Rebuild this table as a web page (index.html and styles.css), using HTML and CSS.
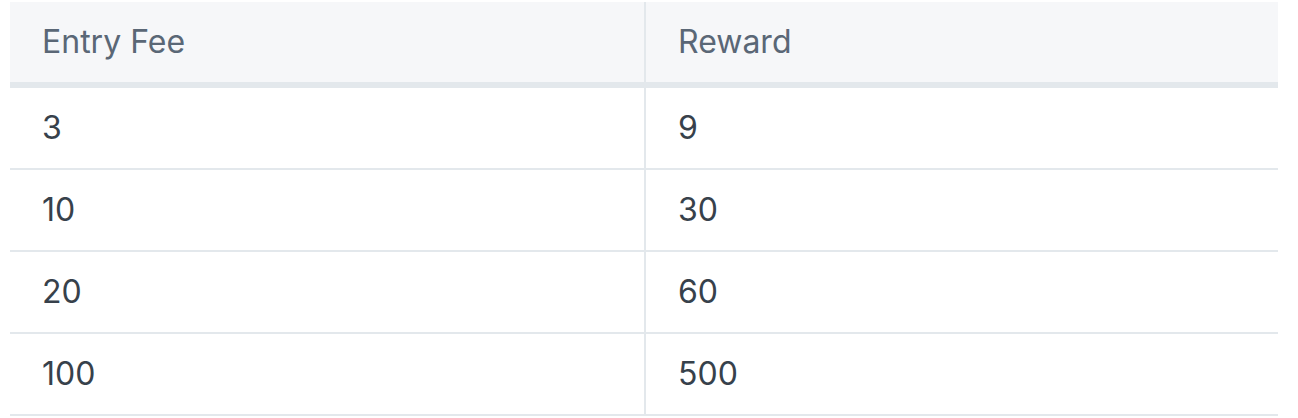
FILE: index.html
```html
<!DOCTYPE html>
<html>
<head>
<meta charset="utf-8">
<link rel="stylesheet" href="styles.css">
</head>
<body>
<table class="fees">
  <colgroup><col class="col-fee"><col class="col-reward"></colgroup>
  <thead>
    <tr><th>Entry Fee</th><th>Reward</th></tr>
  </thead>
  <tbody>
    <tr><td>3</td><td>9</td></tr>
    <tr><td>10</td><td>30</td></tr>
    <tr><td>20</td><td>60</td></tr>
    <tr><td>100</td><td>500</td></tr>
  </tbody>
</table>
</body>
</html>
```
FILE: styles.css
```css
html, body { margin: 0; padding: 0; background: #ffffff; }
body { padding: 2px 20px 0 10px; }
.fees {
  width: 1268px;
  border-collapse: separate;
  border-spacing: 0;
  table-layout: fixed;
  font-family: Inter, "Noto Sans", sans-serif;
  font-size: 32px;
  line-height: 1.2;
}
.col-fee { width: 636px; }
.col-reward { width: 632px; }
.fees th, .fees td {
  text-align: left;
  padding: 0 32px;
  vertical-align: middle;
}
.fees th {
  height: 80px;
  background: #f6f7f9;
  color: #5a6776;
  font-weight: 400;
  border-bottom: 6px solid #e3e8ec;
}
.fees th:first-child { border-right: 2px solid #e3e8ec; }
.fees td {
  height: 80px;
  color: #37414b;
  border-bottom: 2px solid #e3e8ec;
}
.fees td:first-child { border-right: 2px solid #e3e8ec; }
```
